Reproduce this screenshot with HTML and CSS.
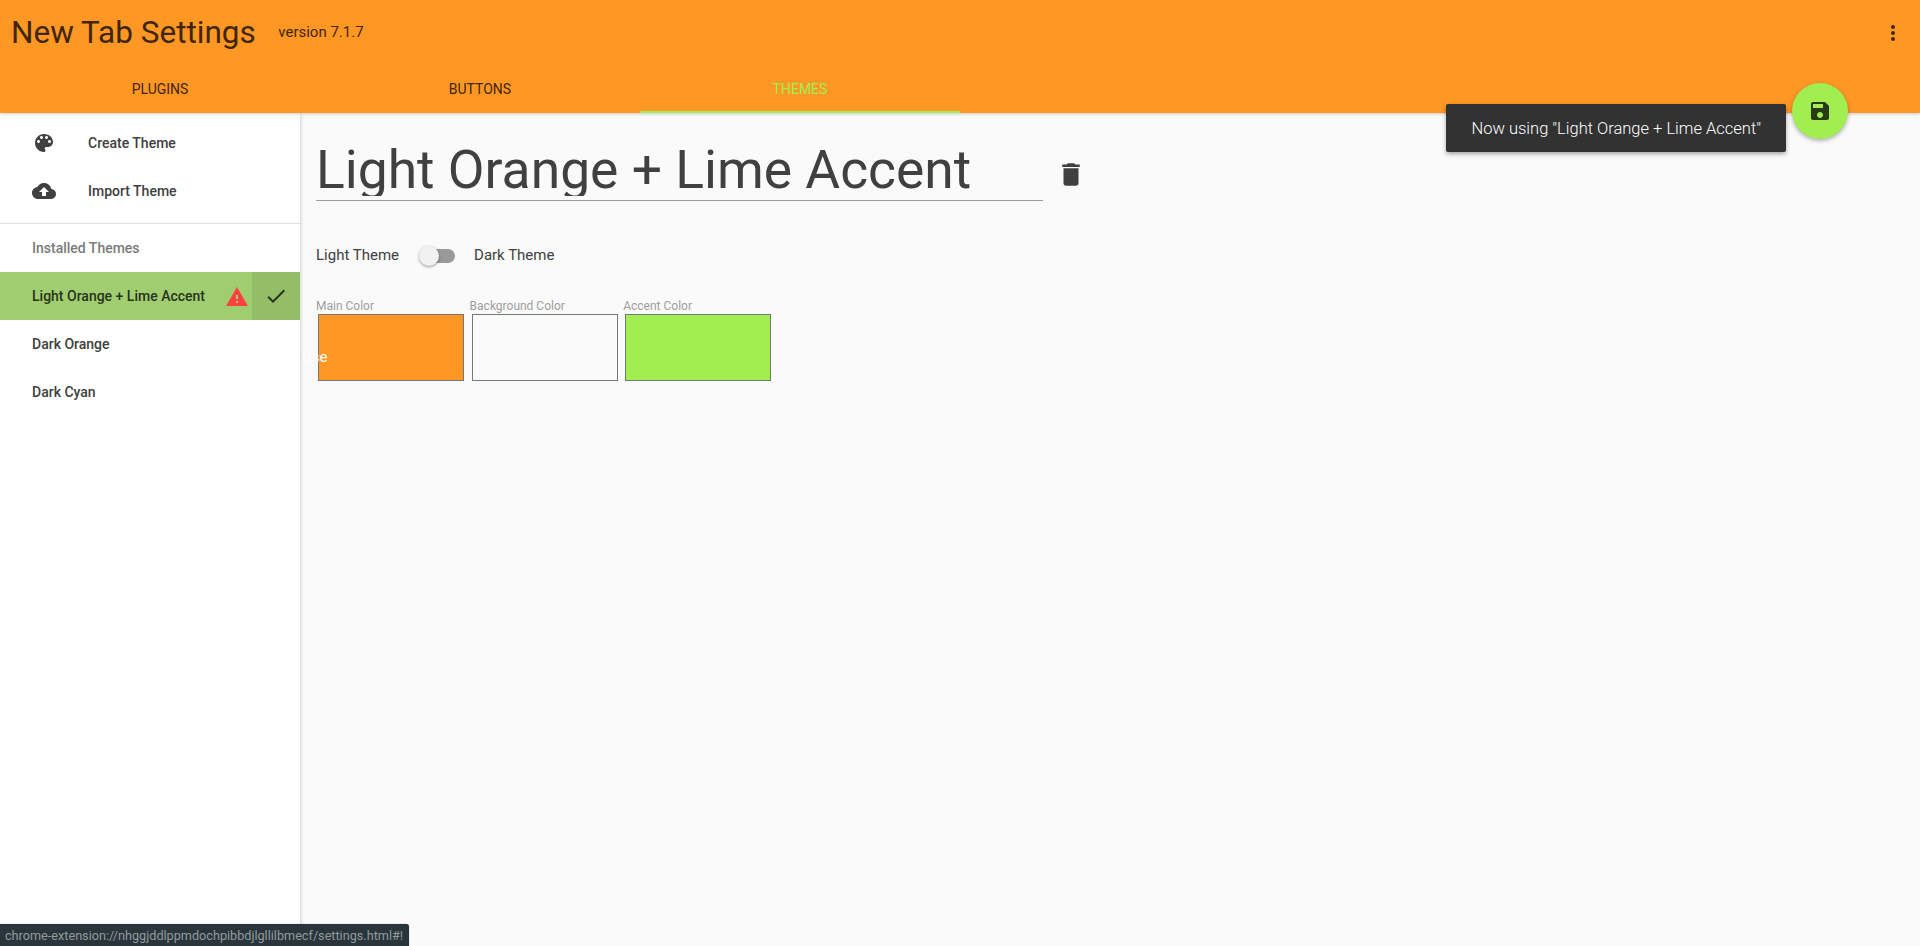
FILE: index.html
```html
<!DOCTYPE html>
<html lang="en">
<head>
<meta charset="utf-8">
<title>New Tab Settings</title>
<link rel="stylesheet" href="styles.css">
</head>
<body>
<header class="header">
  <div class="topbar">
    <h1 class="title">New Tab Settings</h1>
    <span class="version">version 7.1.7</span>
    <svg class="icon more" viewBox="0 0 24 24"><path d="M12 8c1.1 0 2-.9 2-2s-.9-2-2-2-2 .9-2 2 .9 2 2 2zm0 2c-1.1 0-2 .9-2 2s.9 2 2 2 2-.9 2-2-.9-2-2-2zm0 6c-1.1 0-2 .9-2 2s.9 2 2 2 2-.9 2-2-.9-2-2-2z"/></svg>
  </div>
  <nav class="tabs">
    <a class="tab">PLUGINS</a>
    <a class="tab">BUTTONS</a>
    <a class="tab active">THEMES</a>
  </nav>
</header>
<div class="body">
  <aside class="side">
    <a class="item action"><svg class="icon" viewBox="0 0 24 24"><path d="M12 3c-4.97 0-9 4.03-9 9s4.03 9 9 9c.83 0 1.5-.67 1.5-1.5 0-.39-.15-.74-.39-1.01-.23-.26-.38-.61-.38-.99 0-.83.67-1.5 1.5-1.5H16c2.76 0 5-2.24 5-5 0-4.42-4.03-8-9-8zm-5.5 9c-.83 0-1.5-.67-1.5-1.5S5.67 9 6.500 9 8 9.670 8 10.500 7.330 12 6.500 12zm3-4C8.670 8 8 7.330 8 6.500S8.670 5 9.500 5s1.500.67 1.500 1.500S10.330 8 9.500 8zm5 0c-.83 0-1.500-.67-1.500-1.500S13.670 5 14.500 5s1.500.67 1.500 1.500S15.330 8 14.500 8zm3 4c-.83 0-1.500-.67-1.500-1.500S16.670 9 17.500 9s1.500.67 1.500 1.500-.67 1.500-1.500 1.500z"/></svg>Create Theme</a>
    <a class="item action"><svg class="icon" viewBox="0 0 24 24"><path d="M19.350 10.040C18.670 6.590 15.640 4 12 4 9.110 4 6.600 5.640 5.350 8.040 2.340 8.360 0 10.910 0 14c0 3.310 2.690 6 6 6h13c2.760 0 5-2.240 5-5 0-2.640-2.050-4.780-4.650-4.960zM14 13v4h-4v-4H7l5-5 5 5h-3z"/></svg>Import Theme</a>
    <div class="divider"></div>
    <div class="item subheader">Installed Themes</div>
    <div class="item selected">
      <span class="name">Light Orange + Lime Accent</span>
      <svg class="icon warn" viewBox="0 0 24 24"><path d="M1 21h22L12 2 1 21zm12-3h-2v-2h2v2zm0-4h-2v-4h2v4z"/></svg>
      <span class="use"><svg class="icon" viewBox="0 0 24 24"><path d="M9 16.170L4.830 12l-1.420 1.410L9 19 21 7l-1.410-1.410z"/></svg></span>
    </div>
    <div class="item">Dark Orange</div>
    <div class="item">Dark Cyan</div>
  </aside>
  <main class="main">
    <div class="name-row">
      <div class="name-field"><div class="name-text">Light Orange + Lime Accent</div></div>
      <svg class="icon trash" viewBox="0 0 24 24"><path d="M6 19c0 1.100.9 2 2 2h8c1.100 0 2-.9 2-2V7H6v12zM19 4h-3.500l-1-1h-5l-1 1H5v2h14V4z"/></svg>
    </div>
    <div class="mode"><span>Light Theme</span><span class="track"><span class="knob"></span></span><span>Dark Theme</span></div>
    <div class="colors">
      <div class="color">Main Color<div class="swatch orange"></div></div>
      <div class="color">Background Color<div class="swatch"></div></div>
      <div class="color">Accent Color<div class="swatch lime"></div></div>
    </div>
  </main>
</div>
<div class="tooltip">Use</div>
<div class="toast">Now using "Light Orange + Lime Accent"</div>
<div class="fab"><svg class="icon" viewBox="0 0 24 24"><path d="M17 3H5c-1.110 0-2 .9-2 2v14c0 1.100.89 2 2 2h14c1.100 0 2-.9 2-2V7l-4-4zm-5 16c-1.660 0-3-1.340-3-3s1.340-3 3-3 3 1.340 3 3-1.340 3-3 3zm3-10H5V5h10v4z"/></svg></div>
<div class="status">chrome-extension://nhggjddlppmdochpibbdjlgllilbmecf/settings.html#!</div>
</body>
</html>
```
FILE: styles.css
```css
* { box-sizing: border-box; }
body {
  margin: 0;
  height: 946px;
  overflow: hidden;
  display: flex;
  flex-direction: column;
  background: #fafafa;
  color: #404040;
  font: 15px/22px Roboto, sans-serif;
}
.icon { width: 24px; height: 24px; flex: none; fill: currentColor; display: block; }

.header {
  position: relative;
  z-index: 2;
  height: 113px;
  flex: none;
  background: #ff9724;
  color: #402609;
  box-shadow: 0 1px 3px rgba(0, 0, 0, .2);
}
.topbar { display: flex; align-items: center; height: 65px; padding: 0 15px 1px 11px; }
.title { margin: 1px 0 0; font-size: 31.5px; line-height: 41px; font-weight: 400; }
.version { margin-left: 22.5px; }
.more { margin: 2px 0 0 auto; }
.tabs { display: flex; height: 48px; }
.tab { width: 320px; text-align: center; font-size: 14px; line-height: 48px; }
.tab.active { color: #a0ee50; border-bottom: 2px solid #a0ee50; }

.body { display: flex; flex: 1; min-height: 0; }
.side {
  width: 300px;
  padding-top: 6px;
  background: #fff;
  box-shadow: 0 1px 4px rgba(0, 0, 0, .25);
  font-size: 14px;
  font-weight: 500;
}
.item { display: flex; align-items: center; height: 48px; padding-left: 32px; }
.action { gap: 32px; }
.divider { height: 1px; margin-top: 8px; background: #e0e0e0; }
.subheader { color: #7a7a7a; }
.selected { background: #a1cd71; color: #28331c; }
.warn { margin: 2px 3.5px 0 auto; fill: #ff4040; }
.use { display: grid; place-items: center; width: 48px; height: 48px; background: #94bd68; }

.main { flex: 1; padding: 24px 16px; }
.name-row { display: flex; align-items: flex-start; gap: 13px; height: 74px; }
.name-field { width: 727px; height: 64px; padding-bottom: 4px; border-bottom: 1px solid #9e9e9e; }
.name-text { height: 59px; overflow: hidden; white-space: nowrap; font-size: 53.4px; line-height: 66px; }
.trash { width: 30px; height: 31px; margin-top: 22px; }
.mode { display: flex; align-items: center; height: 22px; margin-top: 33px; }
.track { position: relative; width: 34px; height: 14px; margin: 2px 19px 0 22px; border-radius: 7px; background: #999; }
.knob {
  position: absolute;
  left: -2px;
  top: -3px;
  width: 20px;
  height: 20px;
  border-radius: 50%;
  background: #f1f1f1;
  box-shadow: 0 1px 3px rgba(0, 0, 0, .4);
}
.colors { display: flex; gap: 5.6px; margin-top: 32px; color: #9e9e9e; font-size: 12px; line-height: 16px; }
.swatch { width: 146px; height: 67px; margin-left: 2px; border: 1px solid #767676; }
.orange { background: #ff9724; }
.lime { background: #a0ee50; }

.tooltip { position: absolute; left: 302px; top: 346px; color: #fff; }
.toast {
  position: absolute;
  z-index: 3;
  left: 1446px;
  top: 104px;
  width: 340px;
  height: 48px;
  padding-left: 25.5px;
  border-radius: 2px;
  background: #323232;
  color: #fff;
  font-size: 16.5px;
  font-weight: 300;
  line-height: 49px;
  white-space: nowrap;
  box-shadow: 0 2px 4px rgba(0, 0, 0, .35);
}
.fab {
  position: absolute;
  z-index: 3;
  left: 1792px;
  top: 83px;
  display: grid;
  place-items: center;
  width: 56px;
  height: 56px;
  border-radius: 50%;
  background: #a0ee50;
  color: #283b14;
  box-shadow: 0 2px 4px rgba(0, 0, 0, .3);
}
.status {
  position: absolute;
  left: 0;
  bottom: 0;
  width: 409px;
  height: 22px;
  padding-left: 5px;
  border-top-right-radius: 3px;
  background: #29353b;
  color: #929a9d;
  font-size: 12.67px;
  line-height: 24px;
  white-space: nowrap;
  box-shadow: 0 0 1px rgba(0, 0, 0, .6);
}
```
